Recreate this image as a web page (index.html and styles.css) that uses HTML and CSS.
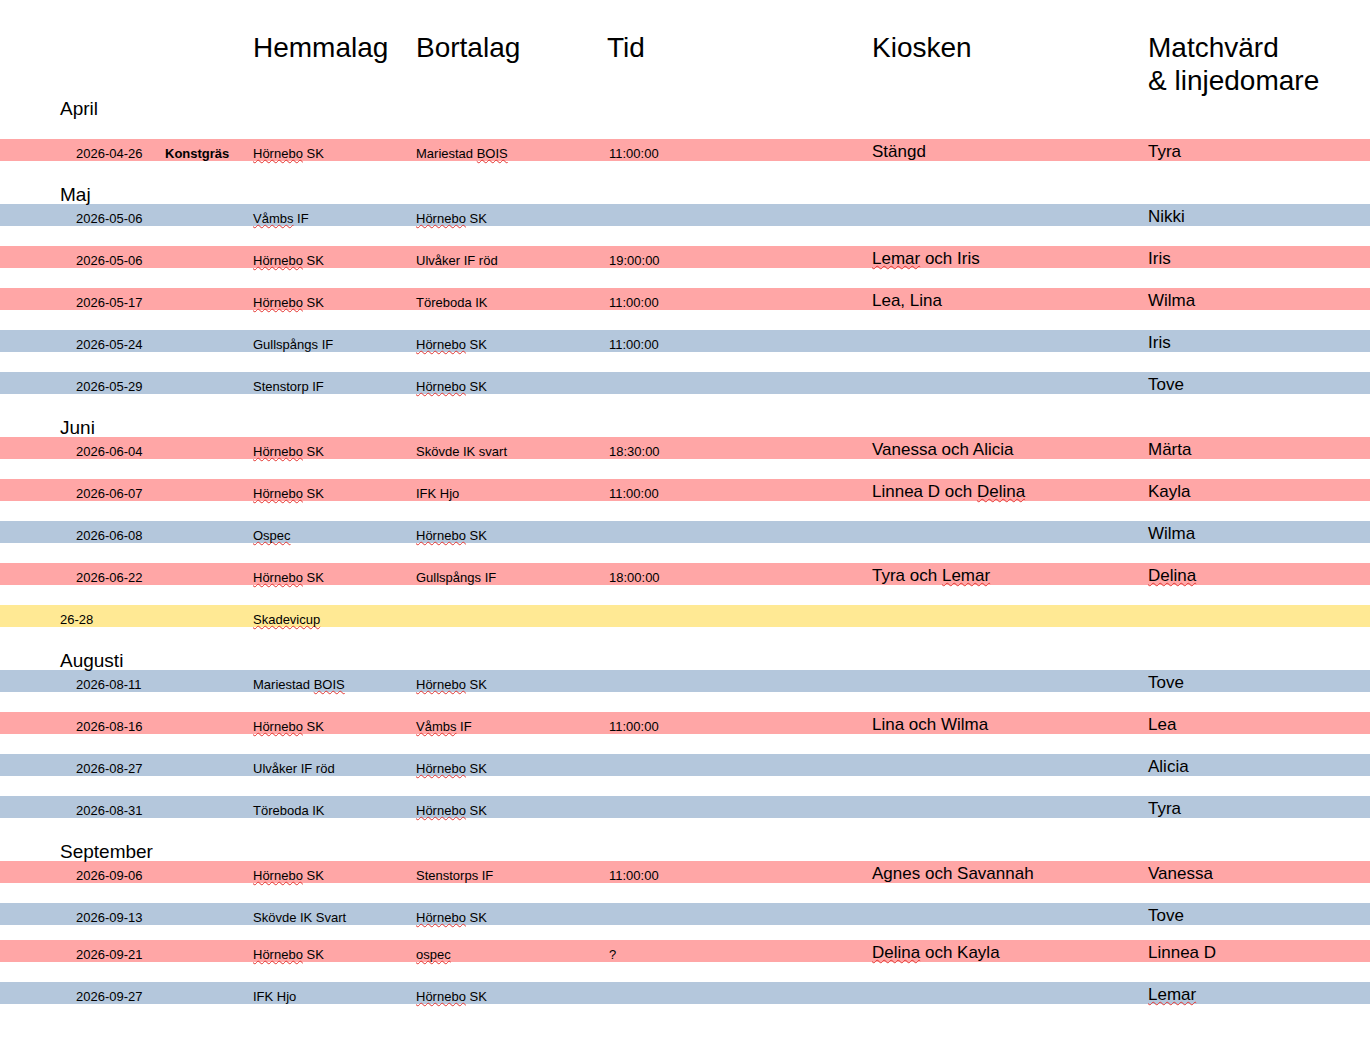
FILE: index.html
```html
<!DOCTYPE html>
<html lang="sv">
<head>
<meta charset="utf-8">
<title>Matchschema</title>
<link rel="stylesheet" href="styles.css">
</head>
<body>
<div class="sheet">
  <div class="cols head">
    <div class="c-home">Hemmalag</div>
    <div class="c-away">Bortalag</div>
    <div class="c-time">Tid</div>
    <div class="c-kiosk">Kiosken</div>
    <div class="c-host">Matchvärd<br>&amp; linjedomare</div>
  </div>

  <div class="month first">April</div>
  <div class="cols row home">
    <div class="s c-date">2026-04-26</div>
    <div class="s b c-note">Konstgräs</div>
    <div class="s c-home"><span class="sp">Hörnebo</span> SK</div>
    <div class="s c-away">Mariestad <span class="sp">BOIS</span></div>
    <div class="s c-time">11:00:00</div>
    <div class="l c-kiosk">Stängd</div>
    <div class="l c-host">Tyra</div>
  </div>

  <div class="month">Maj</div>
  <div class="cols row away">
    <div class="s c-date">2026-05-06</div>
    <div class="s c-home"><span class="sp">Våmbs</span> IF</div>
    <div class="s c-away"><span class="sp">Hörnebo</span> SK</div>
    <div class="l c-host">Nikki</div>
  </div>
  <div class="cols row home">
    <div class="s c-date">2026-05-06</div>
    <div class="s c-home"><span class="sp">Hörnebo</span> SK</div>
    <div class="s c-away">Ulvåker IF röd</div>
    <div class="s c-time">19:00:00</div>
    <div class="l c-kiosk"><span class="sp">Lemar</span> och Iris</div>
    <div class="l c-host">Iris</div>
  </div>
  <div class="cols row home">
    <div class="s c-date">2026-05-17</div>
    <div class="s c-home"><span class="sp">Hörnebo</span> SK</div>
    <div class="s c-away">Töreboda IK</div>
    <div class="s c-time">11:00:00</div>
    <div class="l c-kiosk">Lea, Lina</div>
    <div class="l c-host">Wilma</div>
  </div>
  <div class="cols row away">
    <div class="s c-date">2026-05-24</div>
    <div class="s c-home">Gullspångs IF</div>
    <div class="s c-away"><span class="sp">Hörnebo</span> SK</div>
    <div class="s c-time">11:00:00</div>
    <div class="l c-host">Iris</div>
  </div>
  <div class="cols row away">
    <div class="s c-date">2026-05-29</div>
    <div class="s c-home">Stenstorp IF</div>
    <div class="s c-away"><span class="sp">Hörnebo</span> SK</div>
    <div class="l c-host">Tove</div>
  </div>

  <div class="month">Juni</div>
  <div class="cols row home">
    <div class="s c-date">2026-06-04</div>
    <div class="s c-home"><span class="sp">Hörnebo</span> SK</div>
    <div class="s c-away">Skövde IK svart</div>
    <div class="s c-time">18:30:00</div>
    <div class="l c-kiosk">Vanessa och Alicia</div>
    <div class="l c-host">Märta</div>
  </div>
  <div class="cols row home">
    <div class="s c-date">2026-06-07</div>
    <div class="s c-home"><span class="sp">Hörnebo</span> SK</div>
    <div class="s c-away">IFK Hjo</div>
    <div class="s c-time">11:00:00</div>
    <div class="l c-kiosk">Linnea D och <span class="sp">Delina</span></div>
    <div class="l c-host">Kayla</div>
  </div>
  <div class="cols row away">
    <div class="s c-date">2026-06-08</div>
    <div class="s c-home"><span class="sp">Ospec</span></div>
    <div class="s c-away"><span class="sp">Hörnebo</span> SK</div>
    <div class="l c-host">Wilma</div>
  </div>
  <div class="cols row home">
    <div class="s c-date">2026-06-22</div>
    <div class="s c-home"><span class="sp">Hörnebo</span> SK</div>
    <div class="s c-away">Gullspångs IF</div>
    <div class="s c-time">18:00:00</div>
    <div class="l c-kiosk">Tyra och <span class="sp">Lemar</span></div>
    <div class="l c-host"><span class="sp">Delina</span></div>
  </div>
  <div class="cols row cup">
    <div class="s c-range">26-28</div>
    <div class="s c-home"><span class="sp">Skadevicup</span></div>
  </div>

  <div class="month">Augusti</div>
  <div class="cols row away">
    <div class="s c-date">2026-08-11</div>
    <div class="s c-home">Mariestad <span class="sp">BOIS</span></div>
    <div class="s c-away"><span class="sp">Hörnebo</span> SK</div>
    <div class="l c-host">Tove</div>
  </div>
  <div class="cols row home">
    <div class="s c-date">2026-08-16</div>
    <div class="s c-home"><span class="sp">Hörnebo</span> SK</div>
    <div class="s c-away"><span class="sp">Våmbs</span> IF</div>
    <div class="s c-time">11:00:00</div>
    <div class="l c-kiosk">Lina och Wilma</div>
    <div class="l c-host">Lea</div>
  </div>
  <div class="cols row away">
    <div class="s c-date">2026-08-27</div>
    <div class="s c-home">Ulvåker IF röd</div>
    <div class="s c-away"><span class="sp">Hörnebo</span> SK</div>
    <div class="l c-host">Alicia</div>
  </div>
  <div class="cols row away">
    <div class="s c-date">2026-08-31</div>
    <div class="s c-home">Töreboda IK</div>
    <div class="s c-away"><span class="sp">Hörnebo</span> SK</div>
    <div class="l c-host">Tyra</div>
  </div>

  <div class="month">September</div>
  <div class="cols row home">
    <div class="s c-date">2026-09-06</div>
    <div class="s c-home"><span class="sp">Hörnebo</span> SK</div>
    <div class="s c-away">Stenstorps IF</div>
    <div class="s c-time">11:00:00</div>
    <div class="l c-kiosk">Agnes och Savannah</div>
    <div class="l c-host">Vanessa</div>
  </div>
  <div class="cols row away tight">
    <div class="s c-date">2026-09-13</div>
    <div class="s c-home">Skövde IK Svart</div>
    <div class="s c-away"><span class="sp">Hörnebo</span> SK</div>
    <div class="l c-host">Tove</div>
  </div>
  <div class="cols row home">
    <div class="s c-date">2026-09-21</div>
    <div class="s c-home"><span class="sp">Hörnebo</span> SK</div>
    <div class="s c-away"><span class="sp">ospec</span></div>
    <div class="s c-time">?</div>
    <div class="l c-kiosk"><span class="sp">Delina</span> och Kayla</div>
    <div class="l c-host">Linnea D</div>
  </div>
  <div class="cols row away">
    <div class="s c-date">2026-09-27</div>
    <div class="s c-home">IFK Hjo</div>
    <div class="s c-away"><span class="sp">Hörnebo</span> SK</div>
    <div class="l c-host"><span class="sp">Lemar</span></div>
  </div>
</div>
</body>
</html>
```

FILE: styles.css
```css
html, body {
  margin: 0;
  padding: 0;
  background: #ffffff;
}

body {
  font-family: "Liberation Sans", Arial, sans-serif;
  color: #000000;
}

.sheet {
  padding-top: 31px;
}

.cols {
  display: grid;
  grid-template-columns: 60px 105px 88px 163px 191px 265px 276px 1fr;
}

.cols > div {
  white-space: nowrap;
}

.c-range { grid-column: 2; }
.c-date  { grid-column: 2; padding-left: 16px; }
.c-note  { grid-column: 3; }
.c-home  { grid-column: 4; }
.c-away  { grid-column: 5; }
.c-time  { grid-column: 6; }
.c-kiosk { grid-column: 7; }
.c-host  { grid-column: 8; }

.head {
  font-size: 28px;
  line-height: 33px;
  height: 64px;
  align-items: start;
}

.month {
  font-size: 19px;
  line-height: 19px;
  padding-left: 60px;
  padding-top: 4px;
}

.month.first {
  margin-bottom: 21px;
}

.row {
  grid-template-rows: 22px;
  height: 22px;
  margin-bottom: 20px;
  align-items: end;
}

.row.tight {
  margin-bottom: 15px;
}

.home { background: #ffa6a6; }
.away { background: #b4c7dc; }
.cup  { background: #ffe994; }

.s {
  font-size: 13px;
  line-height: 13px;
  padding-bottom: 1px;
}

.s.c-time {
  padding-left: 2px;
}

.s.b {
  font-weight: bold;
}

.l {
  font-size: 17px;
  line-height: 17px;
  padding-bottom: 1px;
}

.sp {
  text-decoration-line: underline;
  text-decoration-style: wavy;
  text-decoration-color: #e3342f;
  text-decoration-thickness: 1px;
  text-underline-offset: 1px;
  text-decoration-skip-ink: none;
}
```
